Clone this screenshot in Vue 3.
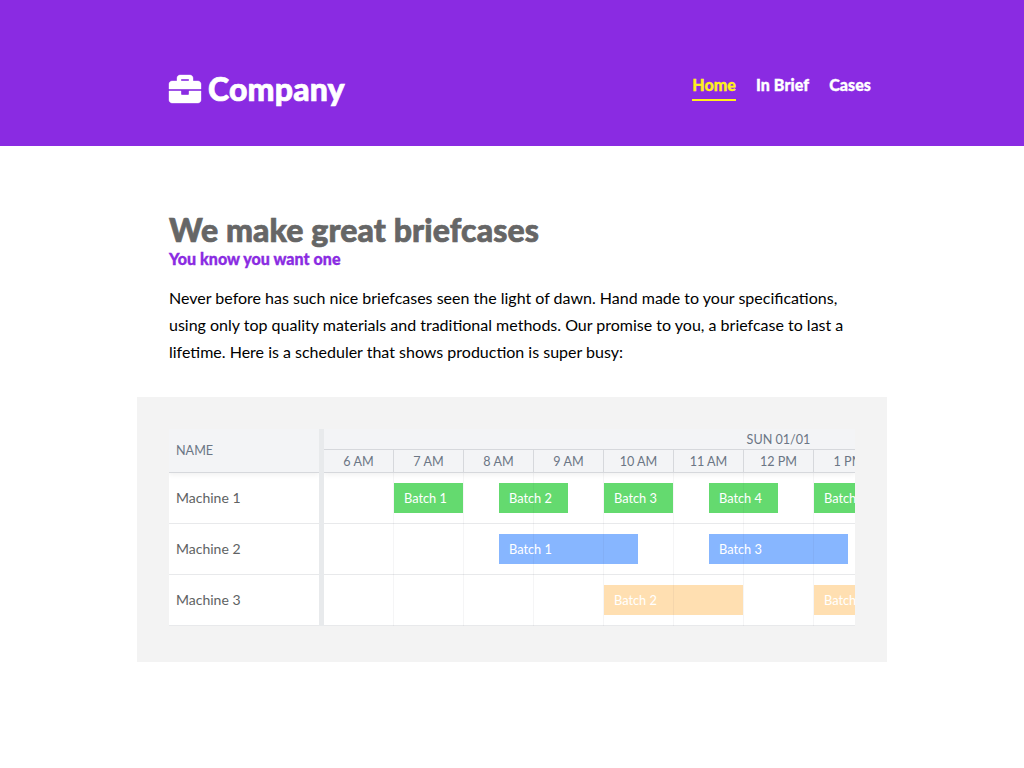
<script setup>
const nav = ['Home', 'In Brief', 'Cases']
const hours = ['6 AM', '7 AM', '8 AM', '9 AM', '10 AM', '11 AM', '12 PM', '1 PM']
const hourWidth = 70
const firstHour = 6
const machines = [
  {
    name: 'Machine 1',
    color: 'green',
    batches: [
      { name: 'Batch 1', start: 7, length: 1 },
      { name: 'Batch 2', start: 8.5, length: 1 },
      { name: 'Batch 3', start: 10, length: 1 },
      { name: 'Batch 4', start: 11.5, length: 1 },
      { name: 'Batch 5', start: 13, length: 1 }
    ]
  },
  {
    name: 'Machine 2',
    color: 'blue',
    batches: [
      { name: 'Batch 1', start: 8.5, length: 2 },
      { name: 'Batch 3', start: 11.5, length: 2 }
    ]
  },
  {
    name: 'Machine 3',
    color: 'orange',
    batches: [
      { name: 'Batch 2', start: 10, length: 2 },
      { name: 'Batch 4', start: 13, length: 2 }
    ]
  }
]
const place = (b) => ({
  left: (b.start - firstHour) * hourWidth + 'px',
  width: b.length * hourWidth - 1 + 'px'
})
</script>

<template>
  <header class="top">
    <div class="inner">
      <h1 class="logo">
        <svg class="case" viewBox="0 0 512 512" aria-hidden="true">
          <path fill="currentColor" d="M320 336c0 8.84-7.16 16-16 16h-96c-8.84 0-16-7.16-16-16v-48H0v144c0 25.6 22.4 48 48 48h416c25.6 0 48-22.4 48-48V288H320v48zm144-208h-80V80c0-25.6-22.4-48-48-48H176c-25.6 0-48 22.4-48 48v48H48c-25.6 0-48 22.4-48 48v80h512v-80c0-25.6-22.4-48-48-48zm-144 0H192V96h128v32z" />
        </svg>
        <span>Company</span>
      </h1>
      <nav class="nav">
        <a v-for="(n, i) in nav" :key="n" :class="{ active: i === 0 }">{{ n }}</a>
      </nav>
    </div>
  </header>
  <main class="main">
    <h2 class="title">We make great briefcases</h2>
    <h3 class="subtitle">You know you want one</h3>
    <p class="text">
      Never before has such nice briefcases seen the light of dawn. Hand made to your specifications,
      using only top quality materials and traditional methods. Our promise to you, a briefcase to last a
      lifetime. Here is a scheduler that shows production is super busy:
    </p>
  </main>
  <section class="panel">
    <div class="scheduler">
      <div class="names">
        <div class="head name-head">NAME</div>
        <div v-for="m in machines" :key="m.name" class="row name">{{ m.name }}</div>
      </div>
      <div class="splitter"></div>
      <div class="timeline">
        <div class="head">
          <div class="day"><span>SUN 01/01</span></div>
          <div class="hours">
            <div v-for="h in hours" :key="h" class="hour">{{ h }}</div>
          </div>
        </div>
        <div v-for="m in machines" :key="m.name" class="row lane">
          <div v-for="h in hours" :key="h" class="cell"></div>
          <div v-for="b in m.batches" :key="b.name" class="batch" :class="m.color" :style="place(b)">{{ b.name }}</div>
        </div>
      </div>
    </div>
  </section>
</template>

<style>
body {
  margin: 0;
  background: #fff;
  font-family: Lato, "Open Sans", sans-serif;
}
</style>

<style scoped>
.top {
  height: 146px;
  background: #8a2be2;
  color: #fff;
}
.inner {
  display: flex;
  justify-content: space-between;
  width: 702px;
  margin-left: 169px;
  padding-top: 70px;
}
.logo {
  display: flex;
  align-items: center;
  gap: 7px;
  height: 38px;
  margin: 0;
  font-size: 32px;
  font-weight: 900;
  line-height: 38px;
}
.logo span {
  letter-spacing: 0.18px;
  -webkit-text-stroke: 0.7px currentColor;
}
.case {
  width: 32px;
  height: 32px;
  overflow: visible;
  stroke: currentColor;
  stroke-width: 6px;
}
.nav {
  display: flex;
  gap: 20px;
  padding-top: 5px;
  font-size: 16px;
  font-weight: 900;
  line-height: 20px;
  letter-spacing: 0.08px;
  -webkit-text-stroke: 0.35px currentColor;
}
.nav a {
  height: 24px;
  border-bottom: 2px solid transparent;
}
.nav .active {
  color: #fff01c;
  border-color: #fff01c;
}
.main {
  width: 686px;
  margin: 65px 0 0 169px;
}
.title {
  margin: 0;
  color: #666;
  font-size: 32px;
  font-weight: 900;
  line-height: 38px;
  letter-spacing: 0.12px;
  -webkit-text-stroke: 0.7px currentColor;
}
.subtitle {
  margin: 0;
  color: #8a2be2;
  font-size: 16px;
  font-weight: 900;
  line-height: 20px;
  letter-spacing: 0.05px;
  -webkit-text-stroke: 0.35px currentColor;
}
.text {
  margin: 15px 0 0;
  font-size: 16px;
  line-height: 27px;
}
.panel {
  box-sizing: border-box;
  width: 750px;
  height: 265px;
  margin: 32px 0 0 137px;
  padding: 32px;
  background: #f3f3f3;
}
.scheduler {
  display: flex;
  width: 686px;
  height: 197px;
  overflow: hidden;
  background: #fff;
}
.names {
  flex: none;
  width: 150px;
}
.splitter {
  position: relative;
  z-index: 2;
  flex: none;
  width: 5px;
  background: #e8eaec;
}
.timeline {
  flex: 1;
  min-width: 0;
  overflow: hidden;
}
.head {
  box-sizing: border-box;
  position: relative;
  z-index: 2;
  height: 44px;
  border-bottom: 1px solid #d6d8dc;
  background: #f3f4f6;
  box-shadow: 0 2px 5px rgba(0, 0, 0, 0.06);
  color: #6b7685;
  font-size: 12.6px;
}
.name-head {
  padding-left: 7px;
  line-height: 43px;
}
.day {
  box-sizing: border-box;
  width: 909px;
  height: 21px;
  border-bottom: 1px solid #d6d8dc;
  line-height: 21px;
  text-align: center;
}
.hours {
  display: flex;
}
.hour {
  box-sizing: border-box;
  flex: none;
  width: 70px;
  height: 22px;
  border-right: 1px solid #d6d8dc;
  line-height: 23px;
  text-align: center;
}
.row {
  box-sizing: border-box;
  height: 51px;
  border-bottom: 1px solid #e8e9eb;
}
.name {
  padding-left: 7px;
  color: #606263;
  font-size: 14px;
  line-height: 50px;
}
.lane {
  position: relative;
  display: flex;
}
.cell {
  box-sizing: border-box;
  position: relative;
  z-index: 1;
  flex: none;
  width: 70px;
  height: 51px;
  border-right: 1px solid rgba(50, 60, 80, 0.05);
}
.batch {
  box-sizing: border-box;
  position: absolute;
  top: 10px;
  height: 30px;
  padding-left: 10px;
  color: #fff;
  font-size: 12.8px;
  line-height: 30px;
  white-space: nowrap;
}
.green {
  background: #64da6f;
}
.blue {
  background: #87b6ff;
}
.orange {
  background: #ffdfb1;
}
</style>
